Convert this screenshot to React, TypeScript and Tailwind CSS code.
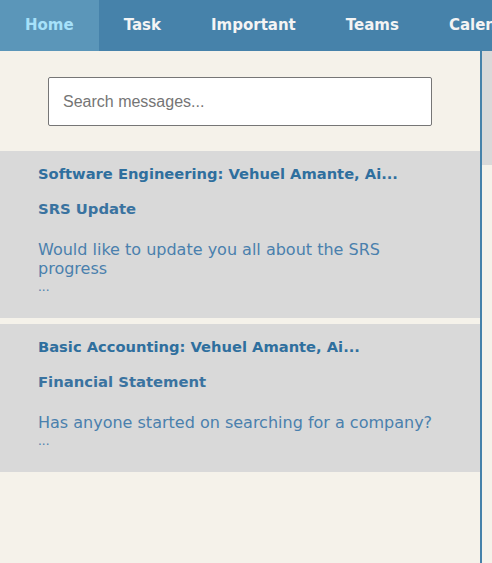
import React from "react";

const font = { fontFamily: '"DejaVu Sans", "Open Sans", sans-serif' };

const tabs = ["Home", "Task", "Important", "Teams", "Calendar"];

const messages = [
  {
    title: "Software Engineering: Vehuel Amante, Ai...",
    subject: "SRS Update",
    body: "Would like to update you all about the SRS progress",
  },
  {
    title: "Basic Accounting: Vehuel Amante, Ai...",
    subject: "Financial Statement",
    body: "Has anyone started on searching for a company?",
  },
];

export default function App() {
  return (
    <div className="w-[492px] h-[563px] overflow-hidden bg-[#f5f2ea] flex flex-col" style={font}>
      <nav className="h-[51px] shrink-0 bg-[#4682aa] flex whitespace-nowrap overflow-hidden">
        {tabs.map((t, i) => (
          <div
            key={t}
            className={
              "px-[25px] shrink-0 flex items-center text-[15px] font-bold " +
              (i === 0 ? "bg-[#5b96b9] text-[#a6e1fa]" : "text-[#f4f4f4]")
            }
          >
            {t}
          </div>
        ))}
      </nav>
      <div className="flex flex-1">
        <div className="w-[480px] flex flex-col">
          <div className="pt-[26px] pb-[25px] pl-[48px]">
            <input
              placeholder="Search messages..."
              className="w-[384px] h-[49px] bg-white border border-[#767676] rounded-[2px] px-[14px] text-[16px] placeholder:text-[#757575] outline-none"
              style={{ fontFamily: '"Liberation Sans", Arial, sans-serif' }}
            />
          </div>
          <div className="flex flex-col gap-[6px]">
            {messages.map((m) => (
              <div key={m.subject} className="bg-[#d9d9d9] pl-[38px] pr-[42px] pt-[12px] pb-[21px]">
                <div className="text-[14.7px] font-bold text-[#2f6f9e] leading-[22px]">{m.title}</div>
                <div className="mt-[13px] text-[14.8px] font-bold text-[#3a73a0] leading-[22px]">{m.subject}</div>
                <div className="mt-[20px] text-[16px] text-[#4a80ad] leading-[19px]">{m.body}</div>
                <div className="text-[12px] text-[#4a80ad] leading-[19px]">...</div>
              </div>
            ))}
          </div>
        </div>
        <div className="w-[2px] bg-[#4682aa]" />
        <div className="flex-1 flex flex-col">
          <div className="h-[114px] bg-[#d9d9d9]" />
        </div>
      </div>
    </div>
  );
}
